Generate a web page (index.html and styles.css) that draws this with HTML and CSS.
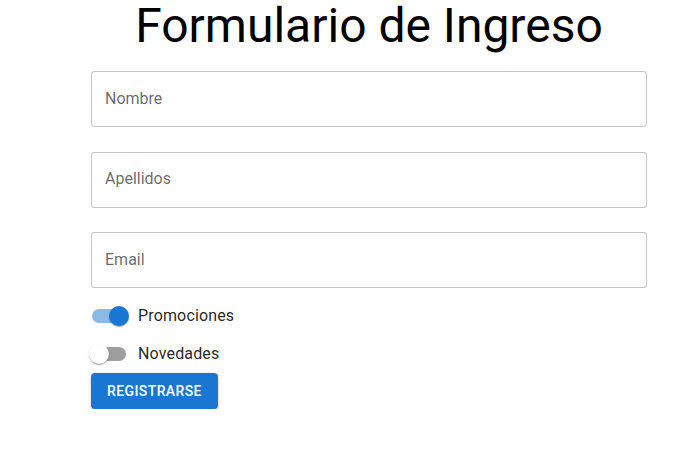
FILE: index.html
```html
<!DOCTYPE html>
<html lang="es">
<head>
<meta charset="utf-8">
<title>Formulario de Ingreso</title>
<link rel="stylesheet" href="styles.css">
</head>
<body>
<main class="page">
  <form class="form">
    <h1 class="title">Formulario de Ingreso</h1>
    <div class="fields">
      <input class="field" type="text" placeholder="Nombre">
      <input class="field" type="text" placeholder="Apellidos">
      <input class="field" type="email" placeholder="Email">
    </div>
    <div class="switches">
      <label class="control">
        <span class="switch on"><span class="track"></span><span class="thumb"></span></span>
        <span class="label">Promociones</span>
      </label>
      <label class="control">
        <span class="switch"><span class="track"></span><span class="thumb"></span></span>
        <span class="label">Novedades</span>
      </label>
    </div>
    <div class="actions">
      <button class="button" type="button">Registrarse</button>
    </div>
  </form>
</main>
</body>
</html>
```

FILE: styles.css
```css
* { box-sizing: border-box; }
html, body {
  margin: 0;
  padding: 0;
  background: #fff;
}
body {
  font-family: Roboto, "Liberation Sans", Arial, sans-serif;
  color: rgba(0, 0, 0, 0.87);
}
.page {
  padding-left: 91px;
}
.form {
  width: 556px;
  display: flex;
  flex-direction: column;
}
.title {
  margin: 0;
  font-size: 48px;
  font-weight: 400;
  line-height: 52px;
  text-align: center;
  color: #000;
}
.fields {
  margin-top: 19px;
  display: flex;
  flex-direction: column;
  gap: 24.5px;
}
.field {
  display: block;
  width: 100%;
  height: 56px;
  border: 1px solid rgba(0, 0, 0, 0.23);
  border-radius: 4px;
  padding: 0 13px 2px;
  font-family: inherit;
  font-size: 16px;
  color: rgba(0, 0, 0, 0.87);
  background: #fff;
  outline: none;
}
.field::placeholder {
  color: rgba(0, 0, 0, 0.6);
  opacity: 1;
}
.switches {
  margin-top: 9px;
  display: flex;
  flex-direction: column;
}
.control {
  display: flex;
  align-items: center;
  margin-left: -11px;
  height: 38px;
}
.switch {
  position: relative;
  width: 58px;
  height: 38px;
  flex: none;
}
.track {
  position: absolute;
  left: 12px;
  top: 12px;
  width: 34px;
  height: 14px;
  border-radius: 7px;
  background: #000;
  opacity: 0.38;
}
.thumb {
  position: absolute;
  left: 9px;
  top: 9px;
  width: 20px;
  height: 20px;
  border-radius: 50%;
  background: #fff;
  box-shadow: 0 2px 1px -1px rgba(0,0,0,0.2), 0 1px 1px 0 rgba(0,0,0,0.14), 0 1px 3px 0 rgba(0,0,0,0.12);
}
.switch.on .track {
  background: #1976d2;
  opacity: 0.5;
}
.switch.on .thumb {
  left: 29px;
  background: #1976d2;
}
.label {
  font-size: 16px;
  line-height: 1.5;
  letter-spacing: 0.15px;
}
.actions {
  margin-top: 0;
  display: flex;
}
.button {
  height: 36px;
  padding: 0 16px;
  border: 0;
  border-radius: 4px;
  background: #1976d2;
  color: #fff;
  font-family: inherit;
  font-size: 14px;
  font-weight: 500;
  letter-spacing: 0.4px;
  text-transform: uppercase;
  box-shadow: 0 3px 1px -2px rgba(0,0,0,0.2), 0 2px 2px 0 rgba(0,0,0,0.14), 0 1px 5px 0 rgba(0,0,0,0.12);
  cursor: pointer;
}
```
